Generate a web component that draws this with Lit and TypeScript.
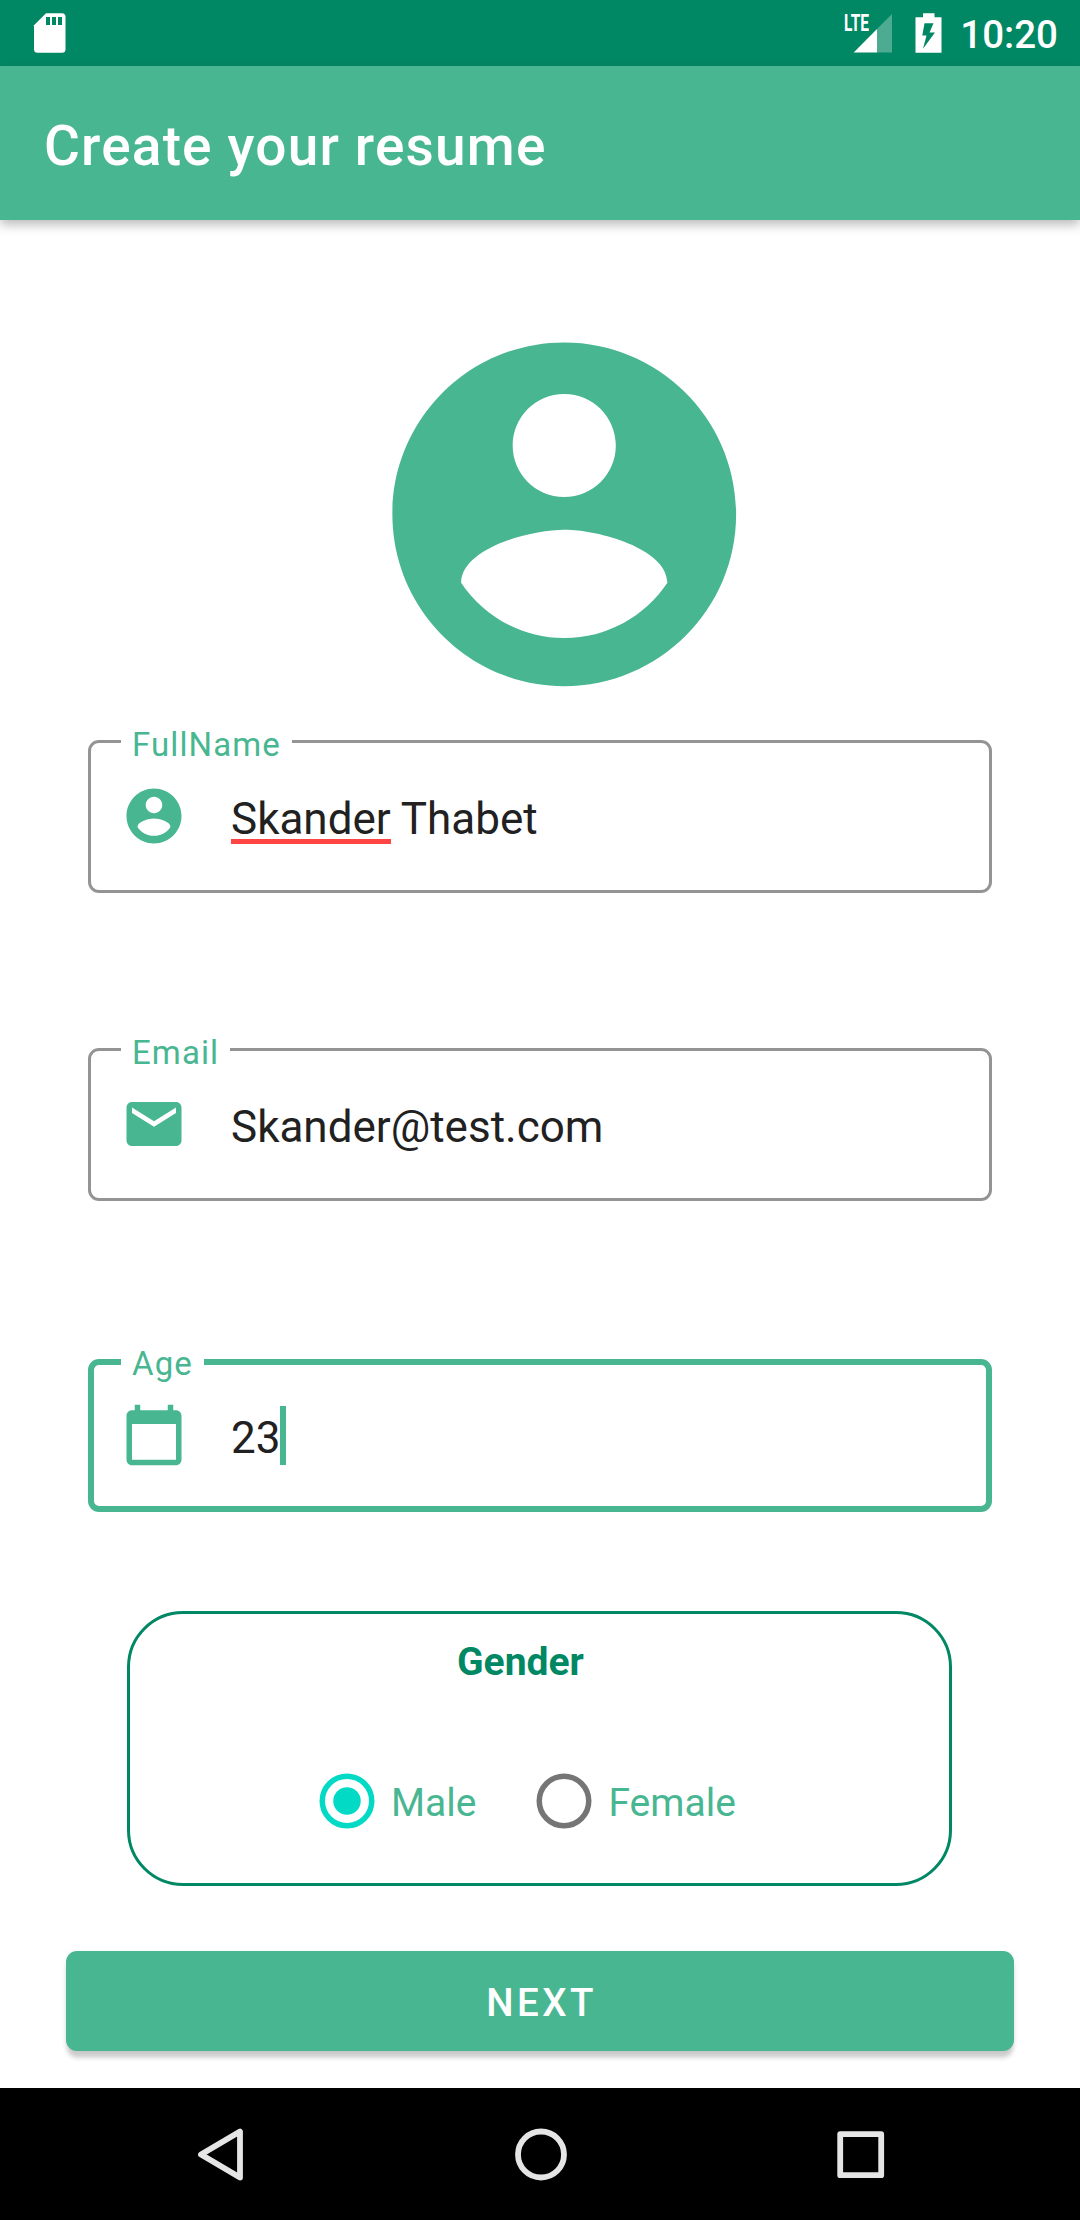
import { LitElement, html, css, svg, nothing } from "lit";
import { customElement, property } from "lit/decorators.js";

const ACCOUNT = svg`<path d="M12 2C6.48 2 2 6.48 2 12s4.48 10 10 10 10-4.48 10-10S17.52 2 12 2zm0 3c1.66 0 3 1.34 3 3s-1.34 3-3 3-3-1.34-3-3 1.34-3 3-3zm0 14.2c-2.5 0-4.71-1.28-6-3.22.03-1.99 4-3.08 6-3.08 1.99 0 5.97 1.09 6 3.08-1.29 1.94-3.5 3.22-6 3.22z"/>`;
const MAIL = svg`<path d="M20 4H4c-1.1 0-1.99.9-1.99 2L2 18c0 1.1.9 2 2 2h16c1.1 0 2-.9 2-2V6c0-1.1-.9-2-2-2zm0 4l-8 5-8-5V6l8 5 8-5v2z"/>`;
const CALENDAR = svg`<path d="M20 3h-1V1h-2v2H7V1H5v2H4c-1.1 0-2 .9-2 2v16c0 1.1.9 2 2 2h16c1.1 0 2-.9 2-2V5c0-1.1-.9-2-2-2zm0 18H4V8h16v13z"/>`;
const ICONS: Record<string, unknown> = { account: ACCOUNT, mail: MAIL, calendar: CALENDAR };

@customElement("status-bar")
class StatusBar extends LitElement {
  static styles = css`
    :host { display: flex; height: 66px; background: #008764; color: #fff; align-items: center; padding: 0 22px 0 33px; box-sizing: border-box; }
    svg { display: block; }
    .spacer { flex: 1; }
    .lte { font: 700 23px "Roboto", sans-serif; fill: #fff; }
    .signal { margin-right: 21.500px; }
    .battery { margin-right: 18.500px; }
    .time { font-weight: 500; font-size: 38.5px; line-height: 46px; padding-top: 3px; }
  `;
  render() {
    return html`
      <svg width="34" height="66" viewBox="33 0 34 66">
        <path fill="#fff" d="M46 13.2H62a3.5 3.5 0 0 1 3.5 3.5V49.3a3.5 3.5 0 0 1-3.5 3.5H37.500a3.500 3.500 0 0 1-3.500-3.500V25.300z"/>
        <path fill="#008764" d="M46 17h4v8h-4zM52 17h4v8h-4zM58 17h4v8h-4z"/>
      </svg>
      <span class="spacer"></span>
      <svg class="signal" width="50" height="66" viewBox="843 0 50 66">
        <path fill="#fff" opacity=".3" d="M892 14V52.500H877V29z"/>
        <path fill="#fff" d="M877 29V52.500H853.700z"/>
        <text class="lte" x="844" y="31" textLength="25" lengthAdjust="spacingAndGlyphs">LTE</text>
      </svg>
      <svg class="battery" width="27" height="66" viewBox="914.500 0 27 66">
        <path fill="#fff" fill-rule="evenodd" d="M922.500 13.300h11.500v4h7v35.500h-26v-35.500h7.500zM924 23.300l-2.200 12.200h4.200l-3.500 13.300 12-16.300h-5.500l4-9.200z"/>
      </svg>
      <span class="time">10:20</span>
    `;
  }
}

@customElement("outlined-field")
class OutlinedField extends LitElement {
  @property() label = "";
  @property() value = "";
  @property() icon = "";
  @property() misspelt = "";
  @property({ type: Boolean, reflect: true }) focused = false;
  static styles = css`
    :host { display: block; height: 153px; }
    .box { position: relative; box-sizing: border-box; height: 153px; border: 3px solid #949494; border-radius: 11px; display: flex; align-items: center; padding-left: 30px; }
    :host([focused]) .box { border: 6px solid #49b692; padding-left: 27px; }
    .label { position: absolute; left: 30px; top: -16px; padding: 0 11px; background: #fff; color: #49b692; font-size: 33px; line-height: 36px; letter-spacing: 1.1px; white-space: nowrap; }
    :host([focused]) .label { left: 27px; top: -19px; }
    .icon { width: 66px; height: 66px; fill: #49b692; margin: 0 44px 1px 0; flex: none; }
    .value { color: #212121; font-size: 44px; line-height: 60px; padding-top: 5px; white-space: nowrap; display: flex; }
    .wrong { background: linear-gradient(#ff4444, #ff4444) 0 50px / 100% 5px no-repeat; }
    .rest { white-space: pre; }
    .caret { width: 6px; height: 59px; background: #49b692; margin-top: -2px; }
  `;
  render() {
    return html`
      <div class="box">
        <span class="label">${this.label}</span>
        <svg class="icon" viewBox="0 0 24 24">${ICONS[this.icon]}</svg>
        <div class="value">
          ${this.misspelt ? html`<span class="wrong">${this.misspelt}</span>` : nothing}<span class="rest">${this.value}</span>${this.focused ? html`<span class="caret"></span>` : nothing}
        </div>
      </div>
    `;
  }
}

@customElement("radio-option")
class RadioOption extends LitElement {
  @property() label = "";
  @property({ type: Boolean }) checked = false;
  static styles = css`
    :host { display: flex; align-items: center; }
    .dial { width: 56px; height: 56px; display: block; }
    .text { color: #49b692; font-size: 39px; line-height: 46px; padding: 3px 0 0 16px; }
  `;
  render() {
    const tint = this.checked ? "#03dac6" : "#757575";
    return html`
      <svg class="dial" viewBox="0 0 56 56">
        <circle cx="28" cy="28" r="24.750" fill="none" stroke=${tint} stroke-width="5.500"/>
        ${this.checked ? svg`<circle cx="28" cy="28" r="13.750" fill=${tint}/>` : nothing}
      </svg>
      <span class="text">${this.label}</span>
    `;
  }
}

@customElement("nav-bar")
class NavBar extends LitElement {
  static styles = css`
    :host { display: flex; height: 132px; background: #000; justify-content: space-between; align-items: center; padding: 0 186px 0 187px; box-sizing: border-box; }
    svg { width: 68px; height: 68px; display: block; fill: none; stroke: #e5e5e5; stroke-width: 5.800; stroke-linejoin: round; }
  `;
  render() {
    return html`
      <svg viewBox="0 0 68 68"><path d="M53 11.500V57.500L14 34.500z"/></svg>
      <svg viewBox="0 0 68 68"><circle cx="34" cy="34.500" r="23"/></svg>
      <svg viewBox="0 0 68 68"><rect x="14.200" y="14.200" width="41" height="41"/></svg>
    `;
  }
}

@customElement("app-root")
class AppRoot extends LitElement {
  static styles = css`
    :host { display: flex; flex-direction: column; width: 1080px; height: 2220px; background: #fff; font-family: "Roboto", sans-serif; overflow: hidden; }
    .appbar { height: 154px; box-sizing: border-box; background: #49b692; color: #fff; display: flex; align-items: center; padding: 6px 44px 0; font-size: 55px; font-weight: 500; line-height: 64px; letter-spacing: 1.17px; box-shadow: 0 5px 10px rgba(0, 0, 0, 0.26); }
    .content { flex: 1; display: flex; flex-direction: column; }
    .avatar { width: 412.500px; height: 412.500px; margin: 88px 0 0 358.300px; fill: #49b692; display: block; flex: none; }
    .fields { display: flex; flex-direction: column; padding: 19.500px 88px 0; }
    .email { margin-top: 155px; }
    .age { margin-top: 158px; }
    .gender { margin: 99px 128px 0 127px; height: 275px; box-sizing: border-box; border: 3px solid #008764; border-radius: 56px; flex: none; }
    .heading { margin: 25px 0 0 327px; color: #008764; font-weight: 700; font-size: 39px; line-height: 46px; }
    .options { display: flex; margin: 88px 0 0 189px; gap: 60px; }
    .next { margin: 65px 66px 0; height: 100px; border-radius: 11px; background: #49b692; color: #fff; font-size: 38.5px; font-weight: 500; letter-spacing: 3.440px; line-height: 46px; display: flex; justify-content: center; align-items: center; padding: 4px 0 0 3px; box-sizing: border-box; box-shadow: 0 8px 4px -1px rgba(0, 0, 0, 0.17), 0 2px 6px rgba(0, 0, 0, 0.08); flex: none; }
  `;
  render() {
    return html`
      <status-bar></status-bar>
      <header class="appbar">Create your resume</header>
      <main class="content">
        <svg class="avatar" viewBox="0 0 24 24">${ACCOUNT}</svg>
        <div class="fields">
          <outlined-field label="FullName" icon="account" misspelt="Skander" value=" Thabet"></outlined-field>
          <outlined-field class="email" label="Email" icon="mail" value="Skander@test.com"></outlined-field>
          <outlined-field class="age" label="Age" icon="calendar" value="23" focused></outlined-field>
        </div>
        <section class="gender">
          <div class="heading">Gender</div>
          <div class="options">
            <radio-option label="Male" checked></radio-option>
            <radio-option label="Female"></radio-option>
          </div>
        </section>
        <div class="next">NEXT</div>
      </main>
      <nav-bar></nav-bar>
    `;
  }
}
